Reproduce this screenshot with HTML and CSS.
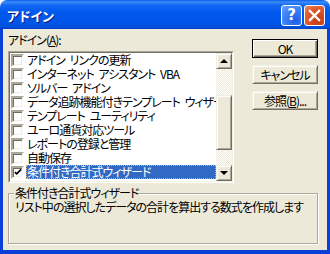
FILE: index.html
```html
<!DOCTYPE html>
<html lang="ja">
<head>
    <meta charset="UTF-8">
    <title>アドイン</title>
    <link rel="stylesheet" href="styles.css">
</head>
<body>
    <div class="window">
        <div class="titlebar">
            <span class="title">アドイン</span>
            <div class="caption-buttons">
                <span class="cap-btn help">?</span>
                <span class="cap-btn close">
                    <svg width="19" height="19" viewBox="0 0 19 19">
                        <path d="M5 5 L14 14 M14 5 L5 14" stroke="#fff" stroke-width="2.4" stroke-linecap="square"/>
                    </svg>
                </span>
            </div>
        </div>

        <div class="client">
            <div class="main">
                <div class="list-col">
                    <div class="field-label">アドイン(<u>A</u>):</div>
                    <div class="listbox">
                        <div class="listbox-inner">
                            <div class="items">
                                <div class="item"><span class="check"></span><span class="item-text">アドイン リンクの更新</span></div>
                                <div class="item"><span class="check"></span><span class="item-text">インターネット アシスタント VBA</span></div>
                                <div class="item"><span class="check"></span><span class="item-text">ソルバー アドイン</span></div>
                                <div class="item"><span class="check"></span><span class="item-text">データ追跡機能付きテンプレート ウィザード</span></div>
                                <div class="item"><span class="check"></span><span class="item-text">テンプレート ユーティリティ</span></div>
                                <div class="item"><span class="check"></span><span class="item-text">ユーロ通貨対応ツール</span></div>
                                <div class="item"><span class="check"></span><span class="item-text">レポートの登録と管理</span></div>
                                <div class="item"><span class="check"></span><span class="item-text">自動保存</span></div>
                                <div class="item selected">
                                    <span class="check">
                                        <svg width="9" height="9" viewBox="0 0 9 9">
                                            <path d="M1 4 L3 6 L8 1" stroke="#000" stroke-width="2" fill="none"/>
                                        </svg>
                                    </span>
                                    <span class="item-text">条件付き合計式ウィザード</span>
                                </div>
                            </div>
                            <div class="scrollbar">
                                <div class="sb-btn"><span class="arrow up"></span></div>
                                <div class="sb-track track-top"></div>
                                <div class="sb-thumb"></div>
                                <div class="sb-track track-bottom"></div>
                                <div class="sb-btn"><span class="arrow down"></span></div>
                            </div>
                        </div>
                    </div>
                </div>

                <div class="button-col">
                    <button class="btn default">OK</button>
                    <button class="btn">キャンセル</button>
                    <button class="btn">参照(<u>B</u>)...</button>
                </div>
            </div>

            <fieldset class="group">
                <legend>条件付き合計式ウィザード</legend>
                <p class="desc">リスト中の選択したデータの合計を算出する数式を作成します</p>
            </fieldset>
        </div>
    </div>
</body>
</html>
```

FILE: styles.css
```css
body {
    margin: 0;
    background: #fff;
    font-family: "Noto Sans CJK JP", "Liberation Sans", sans-serif;
    font-size: 12px;
    font-feature-settings: "palt";
    letter-spacing: -1px;
    word-spacing: 3px;
    color: #000;
}
.window {
    width: 330px;
    height: 254px;
    display: flex;
    flex-direction: column;
}

/* Title bar */
.titlebar {
    height: 29px;
    flex: none;
    display: flex;
    align-items: center;
    justify-content: space-between;
    padding: 0 5px 0 7px;
    border-radius: 7px 7px 0 0;
    background: linear-gradient(#0A5BE6 0, #3D8DFA 2px, #1469F2 5px, #0058EE 12px, #0055E8 22px, #0050DE 27px, #003CC4 29px);
}
.title {
    color: #fff;
    font-weight: bold;
    font-size: 13px;
    line-height: 15px;
    letter-spacing: 0;
    text-shadow: 1px 1px #0A1A8A;
    margin-top: 1px;
}
.caption-buttons {
    display: flex;
    gap: 2px;
    margin-top: 1px;
}
.cap-btn {
    width: 19px;
    height: 19px;
    border: 1px solid #fff;
    border-radius: 3px;
    display: flex;
    align-items: center;
    justify-content: center;
}
.help {
    background: radial-gradient(circle at 70% 75%, #1F5FE8, #3F84F7 60%, #6FA5FB);
    color: #fff;
    font-family: "DejaVu Sans", sans-serif;
    font-weight: bold;
    font-size: 15px;
    line-height: 19px;
    letter-spacing: 0;
}
.close {
    background: radial-gradient(circle at 70% 75%, #C53A0E, #E0582E 60%, #EE8A66);
}

/* Client area */
.client {
    flex: 1;
    background: #ECE9D8;
    border: solid #0B40D8;
    border-width: 0 3px 4px 3px;
    padding: 4px 9px 6px 5px;
}
.main {
    display: flex;
    justify-content: space-between;
}
.list-col {
    width: 226px;
}
.field-label {
    line-height: 14px;
    margin-bottom: 4px;
}

/* List box */
.listbox {
    border: 1px solid;
    border-color: #ACA899 #fff #fff #ACA899;
}
.listbox-inner {
    height: 128px;
    display: flex;
    background: #fff;
    border: 1px solid;
    border-color: #716F64 #F1EFE2 #F1EFE2 #716F64;
}
.items {
    flex: 1;
    overflow: hidden;
}
.item {
    height: 14px;
    display: flex;
    align-items: center;
    padding-left: 1px;
    white-space: nowrap;
}
.check {
    width: 9px;
    height: 9px;
    flex: none;
    background: #fff;
    border: 2px solid;
    border-color: #ACA899 #fff #fff #ACA899;
    box-shadow: inset 1px 1px #716F64, inset -1px -1px #F1EFE2;
    box-sizing: content-box;
    display: flex;
    align-items: center;
    justify-content: center;
}
.check svg {
    display: block;
    margin: 1px 0 0 1px;
}
.item-text {
    margin-left: 2px;
    padding-left: 1px;
    line-height: 14px;
    flex: 1;
}
.selected .item-text {
    background: #316AC5;
    color: #fff;
    outline: 1px dotted #E8A85A;
    outline-offset: -1px;
}

/* Scroll bar */
.scrollbar {
    width: 16px;
    flex: none;
    display: flex;
    flex-direction: column;
}
.sb-btn,
.sb-thumb {
    background: #ECE9D8;
    border: 1px solid;
    border-color: #F1EFE2 #716F64 #716F64 #F1EFE2;
    box-shadow: inset 1px 1px #fff, inset -1px -1px #ACA899;
    box-sizing: border-box;
}
.sb-btn {
    height: 16px;
    display: flex;
    align-items: center;
    justify-content: center;
}
.sb-thumb {
    height: 55px;
}
.sb-track {
    background-image: conic-gradient(#fff 25%, #ECE9D8 0 50%, #fff 0 75%, #ECE9D8 0);
    background-size: 2px 2px;
}
.track-top {
    height: 26px;
}
.track-bottom {
    flex: 1;
}
.arrow {
    width: 0;
    height: 0;
    border-left: 4px solid transparent;
    border-right: 4px solid transparent;
}
.arrow.up {
    border-bottom: 4px solid #000;
}
.arrow.down {
    border-top: 4px solid #000;
}

/* Buttons */
.button-col {
    width: 66px;
    padding-top: 6px;
    display: flex;
    flex-direction: column;
    gap: 7px;
}
.btn {
    height: 19px;
    padding: 0;
    font: inherit;
    font-size: 12px;
    line-height: 14px;
    letter-spacing: -1px;
    color: #000;
    background: #ECE9D8;
    border: 1px solid;
    border-color: #F1EFE2 #716F64 #716F64 #F1EFE2;
    box-shadow: inset 1px 1px #fff, inset -1px -1px #ACA899;
}
.btn.default {
    border-color: #000;
    box-shadow: inset 1px 1px #fff, inset -1px -1px #716F64, inset -2px -2px #ACA899;
}

/* Group box */
.group {
    margin: 3px 0 0 0;
    width: 310px;
    height: 58px;
    box-sizing: border-box;
    padding: 0 6px;
    border: 1px solid #ACA899;
    box-shadow: 1px 1px 0 #fff, inset 1px 1px 0 #fff;
}
.group legend {
    padding: 0 1px;
    margin-left: -1px;
    line-height: 14px;
    background: #ECE9D8;
}
.desc {
    margin: 0;
    line-height: 14px;
    white-space: nowrap;
}
```
